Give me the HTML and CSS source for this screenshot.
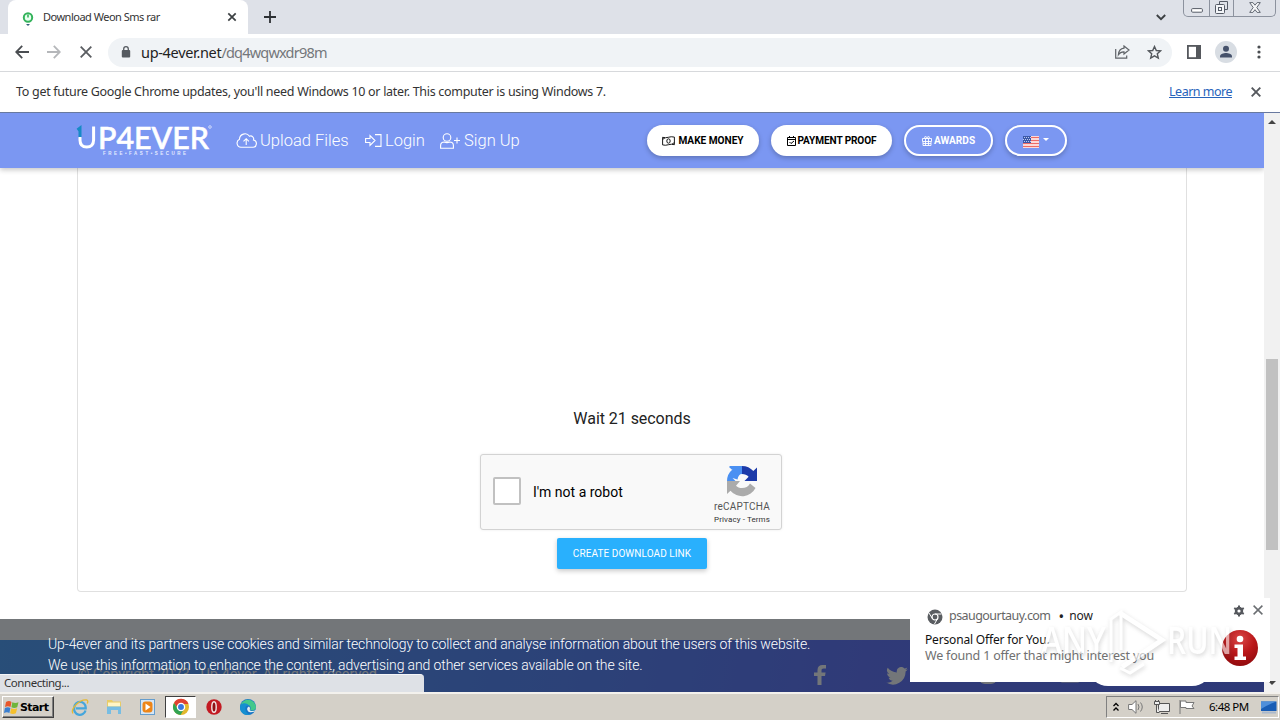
FILE: index.html
```html
<!DOCTYPE html>
<html lang="en">
<head>
<meta charset="utf-8">
<title>Download Weon Sms rar</title>
<link rel="stylesheet" href="styles.css">
</head>
<body>
<div class="desktop">
  <header class="tabstrip">
    <div class="tab">
      <svg class="favicon" width="12" height="14" viewBox="0 0 12 14"><circle cx="6" cy="5.500" r="4.200" fill="#e8fff0" stroke="#34b35b" stroke-width="2"/><path d="M6 2.500v3" stroke="#34b35b" stroke-width="1.600" fill="none"/><path d="M4 12h4l-2 2z" fill="#345f78"/></svg>
      <span class="tab-title">Download Weon Sms rar</span>
      <svg class="tab-close" width="10" height="10" viewBox="0 0 10 10"><path d="M1.300 1.300l7.400 7.400M8.700 1.300L1.300 8.700" stroke="#3c4043" stroke-width="1.700"/></svg>
    </div>
    <svg class="newtab" width="12" height="12" viewBox="0 0 12 12"><path d="M6 0v12M0 6h12" stroke="#2d3034" stroke-width="1.800"/></svg>
    <svg class="chev" width="10" height="7" viewBox="0 0 10 7"><path d="M.8 1L5 5.200 9.200 1" stroke="#3c4043" stroke-width="1.900" fill="none"/></svg>
    <div class="winbtns">
      <span class="wb"><svg width="12" height="5" viewBox="0 0 12 5"><rect x=".6" y=".6" width="10.800" height="3.600" rx="1" fill="#fff" stroke="#555b66"/></svg></span>
      <span class="wb wb2"><svg width="13" height="13" viewBox="0 0 13 13" fill="none" stroke="#555b66"><path d="M4.500 3.500v-3h8v8h-3"/><rect x=".5" y="3.500" width="9" height="9" rx="1" fill="#f3f5f8"/><rect x="3.500" y="6.500" width="3" height="3"/></svg></span>
      <span class="wb wb3"><svg width="12" height="11" viewBox="0 0 12 11"><path d="M.7.6h3.200L6 3.200 8.100.6h3.200L7.800 5.500l3.500 4.900H8.100L6 7.700l-2.100 2.700H.7l3.500-4.900z" fill="#f5f6f8" stroke="#555b66" stroke-width=".9"/></svg></span>
    </div>
  </header>

  <div class="toolbar">
    <svg class="t-back" width="14" height="14" viewBox="0 0 14 14" fill="none" stroke="#4a4d51" stroke-width="1.800"><path d="M14 7H1.500M7.200.9L1.200 7l6 6.100"/></svg>
    <svg class="t-fwd" width="14" height="14" viewBox="0 0 14 14" fill="none" stroke="#b5b7ba" stroke-width="1.800"><path d="M0 7h12.500M6.800.9l6 6.100-6 6.100"/></svg>
    <svg class="t-stop" width="12" height="12" viewBox="0 0 12 12" stroke="#5a5d61" stroke-width="1.800"><path d="M.7.7l10.600 10.600M11.300.7L.7 11.300"/></svg>
    <div class="omnibox">
      <svg class="lock" width="10" height="12" viewBox="0 0 10 12"><rect x=".8" y="4" width="8.400" height="7.500" rx="1" fill="#555a60"/><path d="M2.700 4.500V3a2.300 2.300 0 014.600 0v1.500" fill="none" stroke="#555a60" stroke-width="1.300"/></svg>
      <span class="host">up-4ever.net</span><span class="path">/dq4wqwxdr98m</span>
      <svg class="share" width="15" height="14" viewBox="0 0 15 14" fill="none" stroke="#5f6368" stroke-width="1.200"><path d="M.7 4v9.200h11V10.500"/><path d="M9 1l5 4-5 4V6.800C6.200 6.600 4.700 7.800 3.400 9.700 3.700 6 5.700 3.600 9 3.200z"/></svg>
      <svg class="star" width="15" height="15" viewBox="0 0 15 15" fill="none" stroke="#53575c" stroke-width="1.400"><path d="M7.500 1.500l1.800 4 4.300.4-3.300 2.900 1 4.300-3.800-2.300-3.800 2.300 1-4.300-3.300-2.900 4.300-.4z"/></svg>
    </div>
    <svg class="panel" width="14" height="14" viewBox="0 0 14 14"><rect x=".9" y=".9" width="12.200" height="12.200" fill="#fff" stroke="#55585d" stroke-width="1.800"/><path d="M9 1h4v12H9z" fill="#55585d"/></svg>
    <svg class="avatar" width="22" height="22" viewBox="0 0 22 22"><circle cx="11" cy="11" r="11" fill="#d8dde3"/><circle cx="11" cy="7.800" r="3" fill="#46526b"/><path d="M5 16.500v-1.300c0-2 3.800-3.200 6-3.200s6 1.200 6 3.200v1.300z" fill="#46526b"/></svg>
    <svg class="dots" width="4" height="14" viewBox="0 0 4 14" fill="#4a4d51"><circle cx="2" cy="2" r="1.600"/><circle cx="2" cy="7" r="1.600"/><circle cx="2" cy="12" r="1.600"/></svg>
  </div>

  <div class="infobar">
    <span class="info-text">To get future Google Chrome updates, you'll need Windows 10 or later. This computer is using Windows 7.</span>
    <a class="learn">Learn more</a>
    <svg width="10" height="10" viewBox="0 0 10 10" stroke="#55585d" stroke-width="1.900"><path d="M.7.7l8.600 8.600M9.300.7L.7 9.300"/></svg>
  </div>

  <div class="view">
    <main class="page">
      <nav class="nav">
        <svg class="logo" width="136" height="34" viewBox="0 0 136 34">
          <path d="M4 14.500V5L1.500 7" stroke="#168ac5" stroke-width="3" fill="none"/>
          <path d="M4 14v3c0 4.500 2.500 7 6.800 7s6.800-2.500 6.800-7V3.500" stroke="#fff" stroke-width="3" fill="none"/>
          <text x="22" y="25.500" textLength="111" lengthAdjust="spacingAndGlyphs" class="logo-name">P4EVER</text>
          <text x="27" y="32" textLength="83" class="logo-tag">FREE•FAST•SECURE</text>
          <circle cx="134" cy="4" r="1.300" fill="none" stroke="#fff" stroke-width=".6"/>
        </svg>
        <a class="navlink upload"><svg width="21" height="15" viewBox="0 0 21 15" fill="none" stroke="#fff" stroke-width="1.100"><path d="M5 14.300A4.200 4.200 0 013.500 6.300 5.500 5.500 0 0113.500 3.200a3 3 0 014 3.800A3.700 3.700 0 0117 14.300zM10.200 12V5.800M7.500 8.400l2.700-2.700 2.700 2.700"/></svg><span>Upload Files</span></a>
        <a class="navlink login"><svg width="17" height="13" viewBox="0 0 17 13" fill="none" stroke="#fff" stroke-width="1.100"><path d="M.6 4.500H5V1.500l5 5-5 5v-3H.6zM10 .6h6v11.800h-6"/></svg><span>Login</span></a>
        <a class="navlink signup"><svg width="21" height="16" viewBox="0 0 21 16" fill="none" stroke="#fff" stroke-width="1.100"><circle cx="7" cy="4.500" r="3.800"/><path d="M.6 15.300v-2.800c0-2 1.500-3.500 3.800-3.500 1.700.8 3.500.8 5.200 0 2.300 0 3.800 1.500 3.800 3.500v2.800zM14 7.500h6M17 4.500v6"/></svg><span>Sign Up</span></a>
        <a class="pill solid money"><svg width="13" height="10" viewBox="0 0 13 10" fill="none" stroke="#000" stroke-width=".9"><path d="M.6 1.300c4 1.700 7.500-1.700 11.800-.2v7.600c-4.300-1.700-7.800 1.700-11.800.2z"/><ellipse cx="6.500" cy="5" rx="1.700" ry="2.200"/><path d="M.8 3.300L3 1.800M12.200 6.700L10 8.200"/></svg><span>MAKE MONEY</span></a>
        <a class="pill solid proof"><svg width="9" height="10" viewBox="0 0 9 10" fill="none" stroke="#000"><path d="M.5 1.500h8v8h-8zM.5 3.500h8M2.500 0v2M6.500 0v2M2.500 6l1.500 1.500L7 5"/></svg><span>PAYMENT PROOF</span></a>
        <a class="pill outline awards"><svg width="10" height="10" viewBox="0 0 10 10" fill="none" stroke="#fff" stroke-width=".9"><path d="M.5 2.500h9v3h-9zM1 5.500v4h8v-4M3.500 2.500v7M6.500 2.500v7M1 7.500h8"/><path d="M5 2.500C2 2.500 2 .5 3.500.5S5 2.500 5 2.500 5 .5 6.500.5 8 2.500 5 2.500"/></svg><span>AWARDS</span></a>
        <a class="pill outline lang"><svg class="flag" width="16" height="12" viewBox="0 0 16 12"><path fill="#fff" d="M0 0h16v12H0z"/><path d="M0 1.500h16M0 4.500h16M0 7.500h16M0 10.500h16" stroke="#ec6a66" stroke-width="1.500"/><path fill="#3b58a8" d="M0 0h8v7H0z"/><path d="M1 1.500h7M0 3.500h7M1 5.500h7" stroke="#dfe6ff" stroke-width=".8" stroke-dasharray="1 1"/></svg><svg class="caret" width="6" height="3" viewBox="0 0 6 3"><path d="M0 0h6L3 3z" fill="#fff"/></svg></a>
      </nav>
      <section class="card">
        <div class="wait">Wait 21 seconds</div>
        <div class="captcha">
          <span class="check"></span>
          <span class="robot">I'm not a robot</span>
          <div class="brand">
            <svg width="32" height="32" viewBox="0 0 32 32"><path d="M16 1A15 15 0 006 4.800L3 2v0h13z" fill="#4a90f2"/><path d="M16 1H3l3.500 3.500A15 15 0 001 16h8.500l-3-3 5 1.500C12 11 13.500 9 16 9z" fill="#4a90f2"/><path d="M16 1c4.500 0 8.600 1.900 11.300 5L31 2.500V16H18.500l4.100-4.300C21 9.800 18.700 9 16 9z" fill="#1c3aa9"/><path d="M1 16v13l3.500-3.300A15 15 0 0029.500 23L24 18.500c-1.500 3-4.500 4.500-8 4.500-2.500 0-4.500-.8-6-2.300l4-4.700z" fill="#ababab"/></svg>
            <span class="rc">reCAPTCHA</span>
            <span class="pt">Privacy - Terms</span>
          </div>
        </div>
        <div class="create">CREATE DOWNLOAD LINK</div>
      </section>
      <footer class="footer">
        <div class="ghost">© Copyright 2023 - Up-4ever. All rights reserved</div>
        <svg class="social fb" width="12" height="20" viewBox="0 0 12 20"><path d="M3.500 20v-9H0V7.500h3.500V5c0-3.400 2-5 5-5H12v3.600H9.700C8 3.600 7.500 4.300 7.500 5.600v1.900h4.100L11 11H7.500v9z"/></svg>
        <svg class="social tw" width="22" height="18" viewBox="0 0 24 20"><path d="M24 2.400c-.9.400-1.800.7-2.800.8 1-.6 1.800-1.600 2.200-2.700-1 .6-2 1-3.100 1.200A4.900 4.900 0 0011.900 6.200C7.800 6 4.200 4 1.700.9A4.900 4.900 0 003.200 7.500C2.400 7.500 1.700 7.300 1 6.900c0 2.300 1.600 4.400 3.900 4.900-.7.200-1.500.2-2.200.1.600 2 2.400 3.400 4.600 3.400A10 10 0 010 17.300 14 14 0 0021.500 4.900c1-.7 1.800-1.600 2.500-2.500z"/></svg>
        <svg class="social ig" width="18" height="20" viewBox="0 0 18 20"><rect width="18" height="19" rx="6"/></svg>
        <svg class="social yt" width="20" height="18" viewBox="0 0 20 18"><rect width="20" height="17.500" rx="2"/></svg>
      </footer>
      <div class="cookies">
        <p>Up-4ever and its partners use cookies and similar technology to collect and analyse information about the users of this website.</p>
        <p>We use this information to enhance the content, advertising and other services available on the site.</p>
      </div>
      <div class="rounded-btn"></div>
    </main>
    <div class="scrollbar"><svg width="8" height="4" viewBox="0 0 8 4"><path d="M0 4h8L4 0z" fill="#444"/></svg><div class="thumb"></div><svg width="8" height="4" viewBox="0 0 8 4"><path d="M0 0h8L4 4z" fill="#444"/></svg></div>
    <div class="status">Connecting...</div>
  </div>

  <aside class="toast">
    <div class="toast-head">
      <svg width="16" height="16" viewBox="0 0 16 16"><circle cx="8" cy="8" r="7.500" fill="#5a5d61"/><circle cx="8" cy="8" r="3" fill="#5a5d61" stroke="#fff" stroke-width="1.200"/><path d="M8 5h6.500M5.400 9.500L2 4M10.600 9.500L7.500 15" stroke="#fff" stroke-width="1"/></svg>
      <span class="site">psaugourtauy.com</span><span class="bullet">•</span><span class="now">now</span>
      <svg class="gear" width="12" height="12" viewBox="0 0 12 12"><circle cx="6" cy="6" r="2.900" fill="none" stroke="#55585d" stroke-width="2.600"/><path d="M6 .6v2M6 9.400v2M1.200 3.200l1.800 1M9 7.800l1.800 1M1.200 8.800l1.800-1M9 4.200l1.800-1" stroke="#55585d" stroke-width="2"/></svg>
      <svg width="10" height="10" viewBox="0 0 10 10" stroke="#6b6e72" stroke-width="1.500"><path d="M.6.600l8.800 8.800M9.400.6L.6 9.400"/></svg>
    </div>
    <div class="toast-title">Personal Offer for You.</div>
    <div class="toast-body">We found 1 offer that might interest you</div>
    <svg class="info" width="38" height="38" viewBox="0 0 38 38"><defs><radialGradient id="red" cx=".5" cy=".25" r=".8"><stop offset="0" stop-color="#d94747"/><stop offset=".5" stop-color="#ba1719"/><stop offset="1" stop-color="#8c090c"/></radialGradient></defs><circle cx="19" cy="19" r="18" fill="url(#red)"/><circle cx="19" cy="10" r="3.300" fill="#fff"/><path d="M13.500 15.500h8.500v12h3v3.500H13.500v-3.500h3v-8.500h-3z" fill="#fff"/></svg>
  </aside>

  <svg class="watermark" width="200" height="76" viewBox="0 0 200 76">
    <text x="1" y="52" class="wm" textLength="65" lengthAdjust="spacingAndGlyphs">ANY</text>
    <path d="M80 11L122 38 82 65" class="wm-play"/>
    <path d="M71 60V17l10-7v38M80 66l10 5 14-9" class="wm-edge"/>
    <text x="127" y="52" class="wm" textLength="65" lengthAdjust="spacingAndGlyphs">RUN</text>
  </svg>

  <div class="taskbar">
    <div class="start"><svg width="15" height="15" viewBox="0 0 15 15"><path d="M2 2q3-2 5.500 0L6.500 7Q4 5.500 1 7z" fill="#e8572b"/><path d="M8.300 2.300q3 1.500 6.200 0l-1.300 5q-3 1.400-5.800 0z" fill="#6fb53a"/><path d="M.9 8q3-1.500 5.500 0l-1 5Q3 11.500 0 13z" fill="#3a7fd0"/><path d="M7.200 8.200q3 1.500 6 0l-1.300 5q-3 1.500-5.800 0z" fill="#f5c02c"/></svg><b>Start</b></div>
    <div class="tasks">
      <svg width="18" height="18" viewBox="0 0 18 18" fill="none"><path d="M14.500 12.500A5.700 5.700 0 113.300 9.500a5.700 5.700 0 0111.400 0v.8H5" stroke="#45a6dc" stroke-width="2.300"/><path d="M2 15.500C-1 11 9 .5 16 2c1 .4 1 2 .2 3.500" stroke="#e6b933" stroke-width="1.300"/></svg>
      <svg width="18" height="18" viewBox="0 0 18 18"><path d="M2 2h5l1 1.500h8V12H2z" fill="#e9cc66"/><path d="M3 4.500h12v4H3z" fill="#fff5c5"/><path d="M2 8.500h14V16h-3v-4H6v4H2z" fill="#77bde3"/></svg>
      <svg width="18" height="18" viewBox="0 0 18 18"><rect x="1.500" y="1.500" width="14" height="15" fill="#d6e6f5" stroke="#659dcd"/><rect x="3.500" y="3.500" width="10" height="11" rx="3" fill="#ed8518"/><path d="M6.500 5.500v7l5-3.500z" fill="#fff"/></svg>
      <span class="active"><svg width="18" height="18" viewBox="0 0 18 18"><circle cx="9" cy="9" r="8" fill="#e3b82d"/><path d="M2 5A8 8 0 0116.500 6H9L6 10.500z" fill="#df4132"/><path d="M2 5a8 8 0 006.500 12L12 11H6z" fill="#31a352"/><circle cx="9" cy="9" r="3.600" fill="#3978df" stroke="#fff" stroke-width="1.300"/></svg></span>
      <svg width="18" height="18" viewBox="0 0 18 18"><circle cx="9" cy="9" r="7.700" fill="#c31a22"/><ellipse cx="9" cy="9" rx="2.200" ry="5.300" fill="#901014" stroke="#f3e8e8" stroke-width="1.400"/></svg>
      <svg width="18" height="18" viewBox="0 0 18 18"><circle cx="9" cy="9" r="8" fill="#1675c7"/><path d="M1.500 7A8 8 0 0117 9c0 3-3 4-6 3 1-1 1-4-1.500-5C6 5.500 3 5.500 1.500 7z" fill="#43c88b"/><path d="M1.500 7C4 4 9 5 10 8c-3-1-4 1-3.500 4S10 17 12 16.500C7 18.500-1 15 1.500 7z" fill="#168fd0"/><path d="M10 8.500c2 2 .2 3 1 4 2 1 4 .7 6-.5-1 2-6 3.300-8 1.300-1.500-2-1-4 1-4.800z" fill="#e5edf0"/></svg>
    </div>
    <div class="tray">
      <svg width="6" height="10" viewBox="0 0 6 10" fill="none" stroke="#000" stroke-width="1.300"><path d="M.5 4L3 1.500 5.500 4M.5 8.500L3 6l2.500 2.500"/></svg>
      <svg width="17" height="14" viewBox="0 0 17 14" fill="#fff" stroke="#777"><path d="M.6 4.500H4l4-3.800v12.600L4 9.500H.6z"/><path d="M10 4q2 3 0 6M12.500 2.500q3.500 4.500 0 9" fill="none"/></svg>
      <svg width="16" height="15" viewBox="0 0 16 15" fill="#eee" stroke="#555"><path d="M4.500 3.500h11v8h-11zM7 13.500h7"/><path d="M.5 1.500v3h5v-3zM1.500 0v2M4.500 0v2M2.500 4.500v8h3"/></svg>
      <svg width="16" height="14" viewBox="0 0 16 14" fill="#fff" stroke="#777"><path d="M1 0v14M1.500 1H7v1.500h8L13 6l2 2.500H7V7.500H1.500z"/></svg>
      <span class="clock">6:48 PM</span>
      <svg width="16" height="13" viewBox="0 0 16 13"><path d="M0 .5h15.500V10H0z" fill="#195db5"/><path d="M0 .5h15.500Q8 3 0 8z" fill="#4f8fda"/><path d="M1 10.500h14v2H1z" fill="#aab9cc"/></svg>
    </div>
  </div>
</div>
</body>
</html>
```

FILE: styles.css
```css
* { box-sizing: border-box; }
body { margin: 0; }
svg { display: block; flex: none; }
span, a, p, div { white-space: nowrap; }
.desktop { position: relative; width: 1280px; height: 720px; overflow: hidden; display: flex; flex-direction: column; background: #fff; font-family: "Noto Sans", sans-serif; color: #333; }

.tabstrip { height: 34px; background: #dee1e8; display: flex; padding-left: 8px; }
.tab { width: 240px; height: 34px; background: #fff; border-radius: 8px 8px 0 0; display: flex; align-items: center; padding: 0 11px 0 14px; }
.favicon { margin-top: 3px; }
.tab-title { margin: -2px 0 0 9px; flex: 1; font-size: 11px; letter-spacing: -.5px; color: #333; }
.newtab { margin: 11px 0 0 16px; }
.chev { margin: 14px 0 0 auto; }
.winbtns { margin-left: 17px; width: 93px; height: 17px; border: 1px solid #8c929e; border-top: 0; border-radius: 0 0 5px 5px; display: flex; margin-right: 4px; }
.wb { width: 25px; display: flex; align-items: flex-end; justify-content: center; padding-bottom: 3px; }
.wb2 { border: solid #8c929e; border-width: 0 1px; padding-bottom: 2px; }
.wb3 { width: 41px; }

.toolbar { height: 38px; border-bottom: 1px solid #d7d9dc; display: flex; align-items: center; padding: 0 0 1px 15px; }
.t-fwd { margin-left: 18px; }
.t-stop { margin-left: 19px; }
.omnibox { margin-left: 16px; width: 1064px; height: 29px; border-radius: 15px; background: #f0f3f6; display: flex; align-items: center; padding: 0 10px 0 13px; font-size: 14.500px; }
.host { margin-left: 10px; color: #222; letter-spacing: -.32px; }
.path { color: #74777b; letter-spacing: -.8px; }
.share { margin-left: auto; }
.star { margin-left: 17px; }
.panel { margin-left: 15px; }
.avatar { margin-left: 14px; }
.dots { margin-left: 20px; }

.infobar { height: 40px; display: flex; align-items: center; padding: 0 19px 0 16px; font-size: 12.500px; }
.info-text { letter-spacing: -.295px; margin-top: -2px; }
.learn { margin: -2px 19px 0 auto; color: #2763bb; text-decoration: underline; letter-spacing: -.5px; }

.view { position: relative; height: 580px; display: flex; border-top: 1px solid #68799f; }
.page { position: relative; width: 1264px; height: 579px; overflow: hidden; font-family: Roboto, sans-serif; }
.nav { position: relative; height: 55px; background: #7b97f2; display: flex; padding-left: 76px; box-shadow: 0 2px 5px rgba(0,0,0,.22); }
.logo { margin-top: 10px; overflow: visible; }
.logo-name { font: 500 30px "Lato", sans-serif; fill: #fff; stroke: #fff; stroke-width: .6px; }
.logo-tag { font: bold 4.500px "Liberation Sans", sans-serif; fill: #e6ecff; }
.navlink { height: 55px; display: flex; align-items: center; gap: 3px; color: #fff; font-size: 16.500px; font-weight: 300; }
.upload { margin-left: 24px; width: 113px; }
.login { margin-left: 16px; width: 59px; }
.signup { margin-left: 16px; width: 79px; }
.pill { height: 31px; margin-top: 12px; border-radius: 16px; display: flex; align-items: center; justify-content: center; gap: 3px; font-size: 10.100px; font-weight: 700; box-shadow: 0 2px 5px rgba(0,0,0,.24); }
.solid { background: #fff; color: #000; }
.outline { border: 2px solid #fff; color: #fff; }
.money { margin-left: 128px; width: 112px; }
.proof { margin-left: 12px; width: 121px; gap: 2px; letter-spacing: -.12px; }
.awards { margin-left: 12px; width: 89px; gap: 2px; }
.lang { margin-left: 12px; width: 62px; gap: 4px; }
.flag { margin-top: 2px; }
.caret { margin-bottom: 3px; }

.card { width: 1110px; height: 424px; margin-left: 77px; border: 1px solid #e0e0e0; border-top: 0; border-radius: 0 0 4px 4px; padding-top: 240px; display: flex; flex-direction: column; align-items: center; }
.wait { height: 22px; line-height: 22px; font-size: 16px; color: #222; letter-spacing: -.05px; }
.captcha { margin: 24px 2px 0 0; width: 302px; height: 76px; flex: none; border: 1px solid #d3d3d3; border-radius: 3px; background: #f9f9f9; box-shadow: 0 0 3px rgba(0,0,0,.08); display: flex; padding-left: 12px; }
.check { width: 28px; height: 28px; margin-top: 22px; background: #fff; border: 2px solid #c1c1c1; border-radius: 2px; }
.robot { margin: 27px 0 0 12px; font-size: 14px; line-height: 20px; color: #000; }
.brand { margin-left: auto; width: 78px; display: flex; flex-direction: column; align-items: center; padding-top: 10px; color: #555; }
.rc { font-size: 10px; line-height: 12px; margin-top: 4px; letter-spacing: .2px; }
.pt { font-size: 8px; line-height: 10px; margin-top: 2px; color: #333; letter-spacing: .1px; }
.create { margin-top: 8px; width: 150px; height: 31px; line-height: 31px; flex: none; text-align: center; background: #29b0fd; border-radius: 2px; color: #fff; font-size: 10px; letter-spacing: .08px; box-shadow: 0 2px 5px rgba(0,0,0,.22); }

.footer { height: 60px; margin-top: 48px; background: linear-gradient(100deg, #459bfc, #4e7dfc 45%, #576afc 68%, #5268fc); display: flex; align-items: flex-start; padding: 25px 0 0 78px; fill: #fff; }
.ghost { width: 736px; font-size: 14.500px; line-height: 20px; color: #fff; letter-spacing: -.1px; }
.tw { margin-left: 60px; margin-top: 2px; }
.ig { margin-left: 71px; }
.yt { margin-left: 63px; }
.cookies { position: absolute; left: 0; right: 0; bottom: 0; height: 73px; padding: 15px 48px; background: rgba(22,27,32,.6); color: #fff; font-size: 14px; font-weight: 300; line-height: 21px; }
.cookies p { margin: 0; letter-spacing: -.12px; }
.rounded-btn { position: absolute; left: 1088px; bottom: 6px; width: 124px; height: 40px; border-radius: 20px; background: #fff; }
.scrollbar { width: 16px; height: 579px; background: #f1f1f1; display: flex; flex-direction: column; align-items: center; padding-top: 7px; }
.thumb { width: 12px; height: 191px; margin-top: 235px; margin-bottom: 131px; background: #c1c1c1; flex: none; }
.status { position: absolute; left: 0; bottom: 0; width: 424px; height: 18px; background: #dee1e6; border-top: 1px solid #f5f6f8; border-radius: 0 4px 0 0; padding-left: 4px; font-size: 11.500px; line-height: 15px; letter-spacing: -.55px; }
.status { letter-spacing: -.45px; }

.toast { position: absolute; left: 910px; top: 598px; width: 360px; height: 84px; background: #fff; padding: 10px 7px 0 15px; }
.toast-head { height: 17px; margin-left: 2px; display: flex; align-items: center; font-size: 12.500px; color: #666; }
.site { margin: -2px 0 0 6px; letter-spacing: -.55px; }
.bullet { margin: -2px 0 0 8px; font-size: 15px; color: #222; }
.now { margin: -2px 0 0 5px; color: #222; font-size: 12px; }
.gear { margin: -12px 8px 0 auto; }
.gear + svg { margin-top: -13px; }
.toast-title { margin-top: 7px; font-size: 12px; line-height: 16px; color: #111; letter-spacing: -.17px; }
.toast-body { font-size: 12.500px; line-height: 16px; color: #707070; letter-spacing: -.2px; }
.info { position: absolute; left: 311px; top: 31px; }
.watermark { position: absolute; left: 1040px; top: 602px; filter: drop-shadow(1px 2px 2px rgba(90,90,90,.4)); opacity: .6; }
.wm { font: 600 38px "Open Sans", sans-serif; fill: #fff; }
.wm-play, .wm-edge { fill: none; stroke: #fff; stroke-width: 5px; }
.wm-edge { stroke-width: 3px; }

.taskbar { position: relative; height: 28px; background: #d4d0c8; border-top: 2px solid #f3f1ed; display: flex; align-items: center; padding: 0 1px 0 2px; }
.start { width: 52px; height: 22px; border: 1px solid; border-color: #fff #404040 #404040 #fff; box-shadow: inset -1px -1px #808080; display: flex; align-items: center; padding-left: 1px; gap: 1px; font: 11px "DejaVu Sans", sans-serif; color: #000; letter-spacing: -.6px; }
.tasks { margin-left: 17px; display: flex; align-items: center; gap: 16px; }
.active { width: 31px; height: 22px; margin: 0 -7px 0 -8px; background: #fff; border: 1px solid; border-color: #404040 #fff #fff #404040; display: flex; justify-content: center; align-items: center; }
.tray { margin-left: auto; width: 173px; height: 22px; border: 1px solid; border-color: #808080 #fff #fff #808080; display: flex; align-items: center; padding: 0 1px 0 6px; gap: 9px; color: #000; font-size: 11.500px; }
.clock { margin: -2px 0 0 5px; flex: 1; letter-spacing: -.5px; }
```
